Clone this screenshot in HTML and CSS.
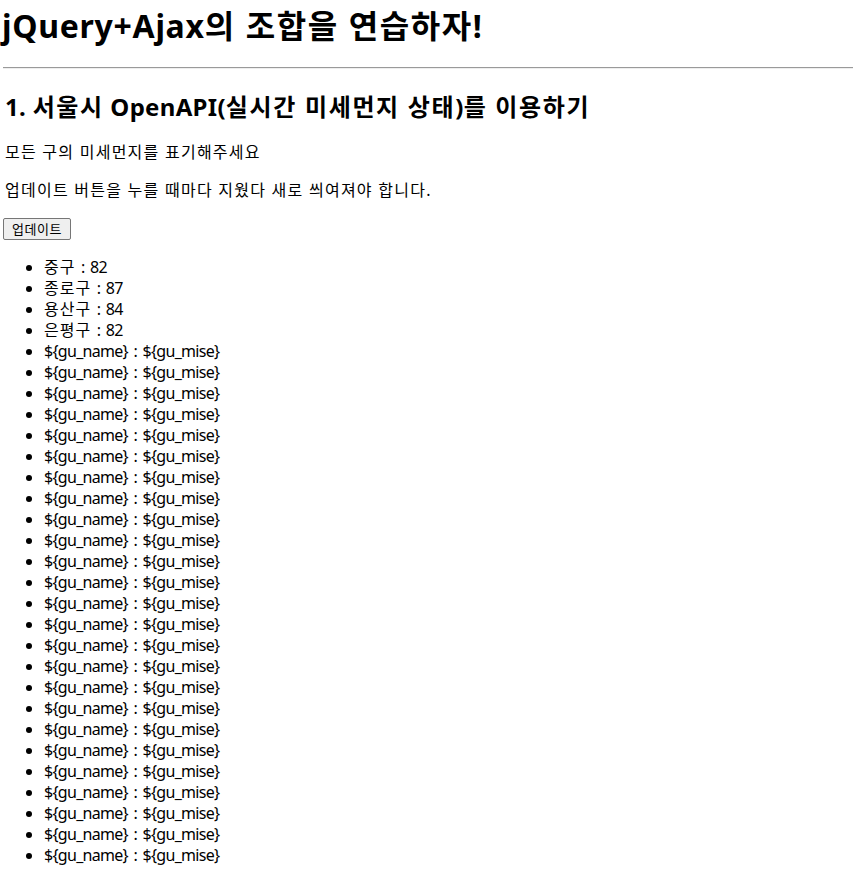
FILE: index.html
```html
<!DOCTYPE html>
<html lang="ko">
<head>
<meta charset="utf-8">
<title>jQuery+Ajax</title>
<link rel="stylesheet" href="styles.css">
</head>
<body>
<h1 class="title">jQuery+Ajax<span class="ko">의 조합을 연습하자!</span></h1>
<hr class="rule">
<div class="section">
<h2 class="subtitle">1. <span class="ko">서울시</span> OpenAPI(<span class="ko">실시간 미세먼지 상태</span>)<span class="ko">를 이용하기</span></h2>
<p class="text first">모든 구의 미세먼지를 표기해주세요</p>
<p class="text">업데이트 버튼을 누를 때마다 지웠다 새로 씌여져야 합니다.</p>
<button class="btn" type="button">업데이트</button>
<ul class="list">
<li><span class="ko">중구</span> : 82</li>
<li><span class="ko">종로구</span> : 87</li>
<li><span class="ko">용산구</span> : 84</li>
<li><span class="ko">은평구</span> : 82</li>
<li>${gu_name} : ${gu_mise}</li>
<li>${gu_name} : ${gu_mise}</li>
<li>${gu_name} : ${gu_mise}</li>
<li>${gu_name} : ${gu_mise}</li>
<li>${gu_name} : ${gu_mise}</li>
<li>${gu_name} : ${gu_mise}</li>
<li>${gu_name} : ${gu_mise}</li>
<li>${gu_name} : ${gu_mise}</li>
<li>${gu_name} : ${gu_mise}</li>
<li>${gu_name} : ${gu_mise}</li>
<li>${gu_name} : ${gu_mise}</li>
<li>${gu_name} : ${gu_mise}</li>
<li>${gu_name} : ${gu_mise}</li>
<li>${gu_name} : ${gu_mise}</li>
<li>${gu_name} : ${gu_mise}</li>
<li>${gu_name} : ${gu_mise}</li>
<li>${gu_name} : ${gu_mise}</li>
<li>${gu_name} : ${gu_mise}</li>
<li>${gu_name} : ${gu_mise}</li>
<li>${gu_name} : ${gu_mise}</li>
<li>${gu_name} : ${gu_mise}</li>
<li>${gu_name} : ${gu_mise}</li>
<li>${gu_name} : ${gu_mise}</li>
<li>${gu_name} : ${gu_mise}</li>
<li>${gu_name} : ${gu_mise}</li>
</ul>
</div>
</body>
</html>
```
FILE: styles.css
```css
html, body {
  margin: 0;
  padding: 0;
  background: #ffffff;
}
body {
  font-family: "Noto Sans", "Noto Sans CJK KR", sans-serif;
  color: #000000;
  font-size: 16px;
}
.title {
  margin: 6px 0 0 2px;
  font-size: 32px;
  line-height: 40px;
  font-weight: bold;
  letter-spacing: 0.7px;
}
.title .ko {
  letter-spacing: 1.6px;
}
.rule {
  margin: 21px 0 0 3px;
  height: 0;
  border: 0;
  border-top: 1px solid #9a9a9a;
  border-bottom: 1px solid #eeeeee;
}
.section {
  padding-left: 5px;
}
.subtitle {
  margin: 23px 0 0 0;
  font-size: 24px;
  line-height: 30px;
  font-weight: bold;
  letter-spacing: 0.3px;
}
.subtitle .ko {
  letter-spacing: 1.65px;
}
.text {
  margin: 17px 0 0 0;
  line-height: 21px;
  letter-spacing: 1.25px;
}
.text.first {
  margin-top: 20px;
}
.btn {
  display: block;
  margin: 17px 0 0 -2px;
  width: 68px;
  height: 22px;
  padding: 0;
  font-family: "Noto Sans CJK KR", sans-serif;
  font-size: 13px;
  line-height: 18px;
  letter-spacing: 0.5px;
  color: #000;
  background: #efefef;
  border: 1px solid #767676;
  border-radius: 2px;
}
.list {
  margin: 17px 0 0 0;
  padding-left: 39px;
  line-height: 21px;
  letter-spacing: -0.7px;
  word-spacing: 2px;
}
.list .ko {
  letter-spacing: 1px;
}
```
